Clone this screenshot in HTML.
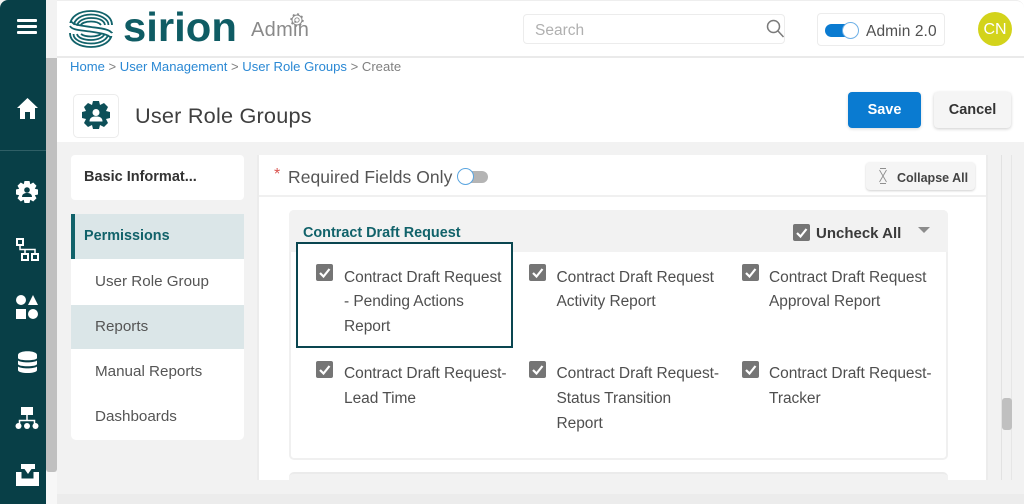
<!DOCTYPE html>
<html><head><meta charset="utf-8"><style>
html,body{margin:0;padding:0;width:1024px;height:504px;overflow:hidden;background:#f2f2f2}
body{position:relative;font-family:"Liberation Sans",sans-serif;color:#4a4a4a}
.a{position:absolute}
.t{position:absolute;white-space:nowrap;line-height:20px}
.l{font-size:15.500px;color:#4f4f4f;letter-spacing:-.05px}
.cb{position:absolute;width:17px;height:17px;background:#757575;border-radius:2px}
.cb svg{display:block}
</style></head><body>
<div class="a" style="left:57px;top:0;width:967px;height:142px;background:#fff"></div>
<div class="a" style="left:57px;top:0;width:967px;height:58px;background:#fff;border-bottom:2px solid #eaeaea;border-top:1px solid #eee;box-sizing:border-box;border-radius:0 8px 0 0"></div>
<div class="a" style="left:46px;top:58px;width:11px;height:414px;background:#c0c0c0;border-radius:0 0 3px 3px"></div>
<div class="a" style="left:46px;top:472px;width:11px;height:32px;background:#f7f7f7"></div>
<div class="a" style="left:0;top:0;width:46px;height:504px;background:#083f47;border-radius:8px 0 0 0"></div>
<div class="a" style="left:57px;top:494px;width:967px;height:10px;background:#ececec"></div>
<div class="a" style="left:0;top:150px;width:46px;height:1px;background:#2f5f66"></div>

<svg class="a" style="left:0;top:0" width="46" height="504" fill="#fff">
<rect x="17" y="19" width="20" height="3" rx="1"/><rect x="17" y="25" width="20" height="3" rx="1"/><rect x="17" y="31" width="20" height="3" rx="1"/>
<path d="M27.500 98 L38 108 H35 V119 H30 V112 H25 V119 H20 V108 H17Z"/>
<g transform="translate(27 192)"><path d="M-2.500-11H2.500L3.300-7.800 6.200-9.500 9.500-6.200 7.800-3.300 11-2.500V2.500L7.800 3.300 9.500 6.200 6.200 9.500 3.300 7.800 2.500 11H-2.500L-3.300 7.800-6.200 9.500-9.500 6.200-7.800 3.300-11 2.500V-2.500L-7.800-3.300-9.500-6.200-6.200-9.500-3.300-7.800Z"/><circle cy="-2" r="2.800" fill="#083f47"/><path d="M-5 5C-5 1.500-2 1 0 1S5 1.500 5 5Z" fill="#083f47"/></g>
<g fill="none" stroke="#fff" stroke-width="2"><rect x="17" y="239" width="6" height="6"/><rect x="22" y="254" width="6" height="6"/><rect x="32" y="254" width="6" height="6"/><path d="M20 245V249.500H35V254M25 249.500V254" stroke-width="1.500"/></g>
<circle cx="21" cy="300" r="5"/><path d="M33 295L38 305H28Z"/><rect x="16" y="309" width="10" height="10"/><circle cx="33" cy="314" r="5"/>
<path d="M18 355C18 350 37 350 37 355V358C37 361 18 361 18 358Z"/><path d="M18 360.500C21 363 34 363 37 360.500V364C37 367 18 367 18 364Z"/><path d="M18 366.500C21 369 34 369 37 366.500V370C37 374 18 374 18 370Z"/>
<rect x="21" y="407" width="12" height="8"/><path d="M27 415V421M19.500 426V420.500H34.500V426" fill="none" stroke="#fff" stroke-width="1.500"/><circle cx="18.500" cy="426" r="3"/><circle cx="27" cy="426" r="3"/><circle cx="35.500" cy="426" r="3"/>
<path d="M21 464H35V469H31.500L28 474L24.500 469H21Z"/><path d="M16 472H21.500V478.500H33.500V472H39V486H16Z"/>
</svg>

<svg class="a" style="left:68px;top:10px" width="46" height="38" viewBox="0 0 46 38" fill="none" stroke="#11626a" stroke-width="1.800">
<path d="M2 16C2 6 12 1 23 1S44 6 44 15"/><path d="M5.500 17C5.500 9 14 4.500 23 4.500S40.500 9 40.500 15"/><path d="M9 17C9 11 16 8 23 8S36 10 37 15"/><path d="M12.500 16C13 13 18 11.500 23 11.500S31 12.500 33 15"/>
<path d="M44 22C44 32 34 37 23 37S2 32 2 23"/><path d="M40.500 22C40.500 30 32 33.500 23 33.500S5.500 30 5.500 24"/><path d="M37 22C37 27 30 30 23 30S10 28 9 24"/><path d="M33.500 23C33 25 28 26.500 23 26.500S15 25.500 13 24"/>
<path d="M2 13C2 18 10 18 22 19.500S44 22 44 26" stroke="#fff" stroke-width="4"/>
<path d="M3 11C5 15 12 15.500 23 17S41 19 44 23" stroke-width="1.800"/><path d="M2 16C4 20 12 20 22 21.500S40 24 43 28" stroke-width="1.800"/>
</svg>
<div class="t" style="left:123px;top:8px;font-size:41px;line-height:38px;font-weight:bold;color:#0f5c64;transform-origin:0 50%;transform:scaleX(1.02)">sirion</div>
<div class="t" style="left:251px;top:20px;font-size:20px;color:#8a8a8a;letter-spacing:.3px">Admin</div>
<svg class="a" style="left:290px;top:13px" width="15" height="15" fill="none" stroke="#8a8a8a"><circle cx="7" cy="7" r="2.200" stroke-width=".9"/><circle cx="7" cy="7" r="5" stroke-width="1"/><circle cx="7" cy="7" r="6" stroke-dasharray="2 2.700" stroke-width="1.400"/></svg>

<div class="a" style="left:523px;top:14px;width:262px;height:30px;border:1px solid #ececec;border-radius:4px;box-sizing:border-box"></div>
<div class="t" style="left:535px;top:20px;font-size:15.500px;color:#b0b0b0;margin-top:1px">Search</div>
<svg class="a" style="left:765px;top:19px" width="20" height="20" fill="none" stroke="#7a7a7a" stroke-width="1.500"><circle cx="8.500" cy="7.500" r="6"/><path d="M13 12L18.500 18"/></svg>
<div class="a" style="left:817px;top:13px;width:128px;height:33px;border:1px solid #ececec;border-radius:4px;box-sizing:border-box"></div>
<div class="a" style="left:825px;top:24px;width:32px;height:13px;background:#0a7bd1;border-radius:7px"></div>
<div class="a" style="left:842px;top:22px;width:17px;height:17px;background:#fff;border:1px solid #6eb0e6;border-radius:50%;box-sizing:border-box"></div>
<div class="t" style="left:866px;top:22px;font-size:15.500px;color:#505050;letter-spacing:.1px">Admin 2.0</div>
<div class="a" style="left:978px;top:12px;width:34px;height:34px;background:#d3d31b;border-radius:50%;color:#fff;font-size:16px;line-height:36px;text-align:center">CN</div>

<div class="t" style="left:70px;top:56px;font-size:13.080px;color:#808080;margin-top:0.500px"><span style="color:#2a88d4">Home</span> &gt; <span style="color:#2a88d4">User Management</span> &gt; <span style="color:#2a88d4">User Role Groups</span> &gt; Create</div>
<div class="a" style="left:73px;top:94px;width:46px;height:44px;background:#fff;border:1px solid #ececec;border-radius:5px;box-sizing:border-box"></div>
<svg class="a" style="left:81px;top:100px" width="30" height="30" fill="#0d4f58"><g transform="translate(15 15)"><path d="M-3-14H3L4-10 8-12 12-8 10-4 14-3V3L10 4 12 8 8 12 4 10 3 14H-3L-4 10-8 12-12 8-10 4-14 3V-3L-10-4-12-8-8-12-4-10Z"/><circle cy="-2.500" r="3.500" fill="#fff"/><path d="M-6.500 6.500C-6.500 2-3 1.500 0 1.500S6.500 2 6.500 6.500Z" fill="#fff"/></g></svg>
<div class="t" style="left:135px;top:104px;font-size:21.700px;line-height:24px;color:#3f3f3f;letter-spacing:.2px">User Role Groups</div>
<div class="a" style="left:848px;top:92px;width:73px;height:36px;background:#0a7bd1;border-radius:4px;color:#fff;font-weight:bold;font-size:14.500px;line-height:37px;text-align:center;box-shadow:0 1px 3px rgba(0,0,0,.15)">Save</div>
<div class="a" style="left:934px;top:92px;width:77px;height:36px;background:#f5f5f5;border-radius:4px;color:#333;font-weight:bold;font-size:14.500px;line-height:37px;text-align:center;box-shadow:0 1px 3px rgba(0,0,0,.2)">Cancel</div>

<div class="a" style="left:71px;top:155px;width:173px;height:45px;background:#fff;border-radius:4px"></div>
<div class="t" style="left:84px;top:167px;font-size:14.500px;font-weight:bold;color:#333">Basic Informat...</div>
<div class="a" style="left:71px;top:214px;width:173px;height:226px;background:#fff;border-radius:0 0 5px 5px"></div>
<div class="a" style="left:71px;top:214px;width:173px;height:45px;background:#dbe6e8"></div>
<div class="a" style="left:71px;top:214px;width:4px;height:45px;background:#11626a"></div>
<div class="a" style="left:71px;top:305px;width:173px;height:44px;background:#dbe6e8"></div>
<div class="t" style="left:84px;top:226px;font-size:14.400px;font-weight:bold;color:#11626a">Permissions</div>
<div class="t" style="left:95px;top:272px;font-size:15.200px;color:#555">User Role Group</div>
<div class="t" style="left:95px;top:317px;font-size:15.200px;color:#555">Reports</div>
<div class="t" style="left:95px;top:362px;font-size:15.200px;color:#555">Manual Reports</div>
<div class="t" style="left:95px;top:407px;font-size:15.200px;color:#555">Dashboards</div>

<div class="a" style="left:257px;top:155px;width:731px;height:325px;background:#fff;border-left:2px solid #ececec;border-right:2px solid #ececec;box-sizing:border-box"></div>
<div class="a" style="left:259px;top:195px;width:727px;height:2px;background:#f0f0f0"></div>
<div class="t" style="left:274px;top:165px;font-size:16px;color:#d9534f">*</div>
<div class="t" style="left:288px;top:167px;font-size:17.500px;color:#555;letter-spacing:.05px">Required Fields Only</div>
<div class="a" style="left:462px;top:171px;width:26px;height:12px;background:#b4b4b4;border-radius:6px"></div>
<div class="a" style="left:457px;top:168px;width:17px;height:17px;background:#fff;border:1px solid #5aa5e0;border-radius:50%;box-sizing:border-box"></div>
<div class="a" style="left:866px;top:162px;width:109px;height:28px;background:#f5f5f5;border-radius:4px;box-shadow:0 1px 2px rgba(0,0,0,.18)"></div>
<svg class="a" style="left:876px;top:168px" width="14" height="16" fill="none" stroke="#8f8f8f"><path d="M3.500 2L10.500 14M10.500 2L3.500 14M4 .5H10M4 15.500H10" stroke-width=".9"/></svg>
<div class="t" style="left:897px;top:168px;font-size:12.500px;font-weight:bold;color:#444">Collapse All</div>

<div class="a" style="left:289px;top:210px;width:659px;height:250px;background:#fff;border:2px solid #f0f0f0;border-radius:5px;box-sizing:border-box"></div>
<div class="a" style="left:289px;top:210px;width:659px;height:42px;background:#f2f2f2;border-radius:5px 5px 0 0"></div>
<div class="t" style="left:303px;top:223px;font-size:14.400px;font-weight:bold;color:#11626a">Contract Draft Request</div>
<div class="cb" style="left:793px;top:224px"><svg width="17" height="17" fill="none" stroke="#fff" stroke-width="2.200"><path d="M4 9L7.500 12.500L13.500 5"/></svg></div>
<div class="t" style="left:816px;top:222px;font-size:15px;font-weight:bold;color:#3a3a3a;margin-top:1.500px">Uncheck All</div>
<svg class="a" style="left:918px;top:227px" width="12" height="7" fill="#8c8c8c"><path d="M0 0H12L6 6Z"/></svg>

<div class="a" style="left:296px;top:242px;width:217px;height:106px;border:2px solid #0a4650;box-sizing:border-box;background:#fff"></div>

<div class="cb" style="left:316px;top:264px"><svg width="17" height="17" fill="none" stroke="#fff" stroke-width="2.200"><path d="M4 9L7.500 12.500L13.500 5"/></svg></div>
<div class="t l" style="left:344px;top:268px">Contract Draft Request</div>
<div class="t l" style="left:344px;top:292px">- Pending Actions</div>
<div class="t l" style="left:344px;top:317px">Report</div>
<div class="cb" style="left:529px;top:264px"><svg width="17" height="17" fill="none" stroke="#fff" stroke-width="2.200"><path d="M4 9L7.500 12.500L13.500 5"/></svg></div>
<div class="t l" style="left:556.500px;top:268px">Contract Draft Request</div>
<div class="t l" style="left:556.500px;top:292px">Activity Report</div>
<div class="cb" style="left:742px;top:264px"><svg width="17" height="17" fill="none" stroke="#fff" stroke-width="2.200"><path d="M4 9L7.500 12.500L13.500 5"/></svg></div>
<div class="t l" style="left:769px;top:268px">Contract Draft Request</div>
<div class="t l" style="left:769px;top:292px">Approval Report</div>

<div class="cb" style="left:316px;top:361px"><svg width="17" height="17" fill="none" stroke="#fff" stroke-width="2.200"><path d="M4 9L7.500 12.500L13.500 5"/></svg></div>
<div class="t l" style="left:344px;top:364px">Contract Draft Request-</div>
<div class="t l" style="left:344px;top:389px">Lead Time</div>
<div class="cb" style="left:529px;top:361px"><svg width="17" height="17" fill="none" stroke="#fff" stroke-width="2.200"><path d="M4 9L7.500 12.500L13.500 5"/></svg></div>
<div class="t l" style="left:556.500px;top:364px">Contract Draft Request-</div>
<div class="t l" style="left:556.500px;top:389px">Status Transition</div>
<div class="t l" style="left:556.500px;top:414px">Report</div>
<div class="cb" style="left:742px;top:361px"><svg width="17" height="17" fill="none" stroke="#fff" stroke-width="2.200"><path d="M4 9L7.500 12.500L13.500 5"/></svg></div>
<div class="t l" style="left:769px;top:364px">Contract Draft Request-</div>
<div class="t l" style="left:769px;top:389px">Tracker</div>

<div class="a" style="left:289px;top:472px;width:659px;height:8px;background:#f2f2f2;border-top:2px solid #ebebeb;border-radius:5px 5px 0 0;box-sizing:border-box"></div>

<div class="a" style="left:1001px;top:155px;width:1px;height:325px;background:#e2e2e2"></div>
<div class="a" style="left:1011px;top:155px;width:1px;height:325px;background:#e6e6e6"></div>
<div class="a" style="left:1002px;top:398px;width:10px;height:32px;background:#c0c0c0;border-radius:3px"></div>
</body></html>
